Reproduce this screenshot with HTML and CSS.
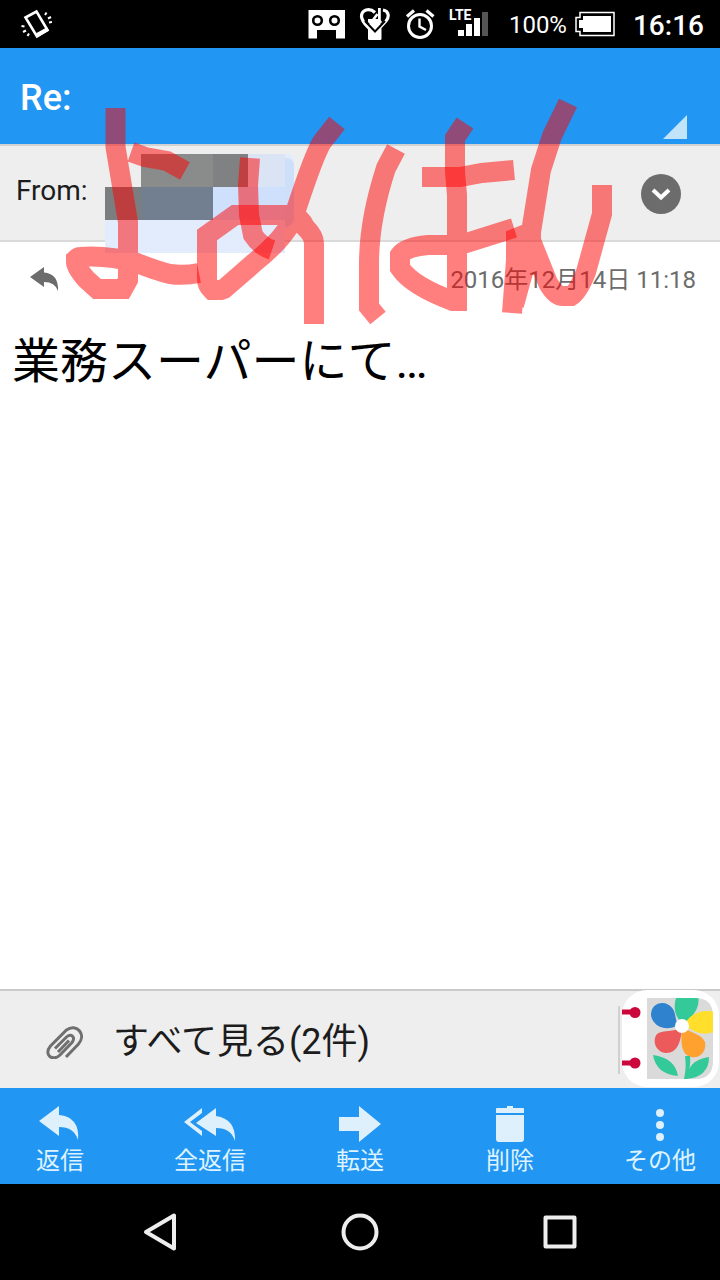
FILE: index.html
```html
<!DOCTYPE html>
<html lang="ja">
<head>
<meta charset="utf-8">
<meta name="viewport" content="width=device-width, initial-scale=1">
<title>Re:</title>
<link rel="stylesheet" href="styles.css">
</head>
<body>
<div class="screen">
  <div class="status">
    <svg class="status-left" width="32" height="32" viewBox="20 8 32 32" fill="none" stroke="#fff">
      <path d="M25.500 17.500L36.500 11.500L47.500 30L37 36.500Z" stroke-width="2.600"/>
      <path d="M37 35L48 29" stroke-width="4"/>
      <path d="M45 15l1.500-2.500M48 18.500l3-1.500M49 22.500l3-.500M24.500 26.500l-3-.5M26 30.500l-3 1.500M29 33.500l-1.500 2.500" stroke-width="2"/>
    </svg>
    <div class="status-right">
      <svg width="38" height="32" viewBox="310 8 38 32">
        <path d="M311.500 10H348V38.500H339V30H320V38.500H311.500Z" fill="#fff"/>
        <circle cx="320.500" cy="20.500" r="4.300" fill="#fff" stroke="#000" stroke-width="2.600"/>
        <circle cx="337.500" cy="20.500" r="4.300" fill="#fff" stroke="#000" stroke-width="2.600"/>
      </svg>
      <svg width="32" height="34" viewBox="361 7 32 34" fill="none">
        <path d="M370 24H383.500V38.500Q383.500 40 382 40H371.500Q370 40 370 38.500Z" fill="#fff"/>
        <path d="M377 12.500C371 7 363.500 10 363.500 16.500C364 22 368 25 371 28M385 10C391 11 391.500 17 388 21L382.500 27" stroke="#fff" stroke-width="3.200"/>
        <path d="M367 21L377 31.500L387 21" stroke="#000" stroke-width="2"/>
        <path d="M370 19H380V8H382.800V20L384 22L377 29.500L370 22Z" fill="#fff"/>
        <path d="M375 20L379.500 14" stroke="#fff" stroke-width="2.600"/>
      </svg>
      <svg width="30" height="32" viewBox="408 8 30 32" fill="none" stroke="#fff">
        <circle cx="423" cy="26" r="11.500" stroke-width="3"/>
        <path d="M422.500 18.500V26.500L429 30" stroke-width="2.400"/>
        <path d="M410 16.500L417 10.500M429.500 10.500L436.500 16.500" stroke-width="3.200"/>
      </svg>
      <span class="signal">
        <svg width="32" height="28" viewBox="457 10 32 28" fill="#fff">
          <path d="M458 30h6v6h-6zM466 24h6v12h-6zM474 18h6v18h-6z"/><path d="M482 12h6v24h-6z" fill="#555"/>
        </svg>
        <b class="lte">LTE</b>
      </span>
      <span class="percent">100%</span>
      <svg width="40" height="26" viewBox="575 11 40 26">
        <path d="M580 12.500H614V35.500H580V31.500H576V17.500H580Z" fill="none" stroke="#fff" stroke-width="1.500"/>
        <path d="M583 16H611V32H583V28H579V20H583Z" fill="#fff"/>
      </svg>
      <time class="clock">16:16</time>
    </div>
  </div>

  <header class="subject">
    <h1>Re:</h1>
    <svg class="corner" width="24" height="24" viewBox="0 0 24 24"><path d="M24 0V24H0Z" fill="#c2e4fb"/></svg>
  </header>

  <section class="sender">
    <span>From:</span>
    <button class="expand" aria-label="詳細">
      <svg width="40" height="40" viewBox="0 0 40 40"><circle cx="20" cy="20" r="20" fill="#6c6c6c"/><path d="M12 16L20 23.500L28 16" fill="none" stroke="#fff" stroke-width="4"/></svg>
    </button>
  </section>

  <main class="message">
    <div class="meta">
      <svg width="30" height="26" viewBox="0 0 30 26"><path d="M0 10L14 0V5.500Q29 7 28 24Q25 15 14 15V20Z" fill="#6c6c6c"/></svg>
      <time>2016年12月14日 11:18</time>
    </div>
    <p class="body-text">業務スーパーにて…</p>
  </main>

  <section class="attachments">
    <button class="view-all">
      <svg width="38" height="34" viewBox="45 1024 38 34" fill="none" stroke="#6f6f6f" stroke-width="3">
        <path d="M66 1056L78.500 1043C87 1033 76 1022 66.500 1029L50.500 1045C43 1054 53 1061 60 1054L72 1041.500C76 1036 71 1032 66.500 1036L55 1047.500M58 1051L69 1039.500"/>
      </svg>
      <span>すべて見る(2件)</span>
    </button>
    <i class="divider"></i>
    <button class="sticker" aria-label="スケッチ">
      <svg width="98" height="97" viewBox="0 0 98 97">
        <defs><clipPath id="card"><path d="M25 8H73Q91 8 91 26V71Q91 89 73 89H25Z"/></clipPath></defs>
        <rect width="97" height="97" rx="25" fill="#fff"/>
        <g clip-path="url(#card)">
          <rect x="25" y="8" width="66" height="81" fill="#dadada"/>
          <path d="M60 33C51 25 51 13 56 3H75C80 15 72 26 62 33Z" fill="#34c998"/>
          <path d="M56 35C43 43 30 35 29 25C29 12 44 9 51 19C54 24 53 29 56 35Z" fill="#2f83ce"/>
          <path d="M62 35C69 22 81 19 94 22V41C82 47 72 42 62 35Z" fill="#ffdf2b"/>
          <path d="M60 37C59 51 56 63 44 63C33 62 30 50 35 44C42 39 51 43 60 37Z" fill="#ed5a5c"/>
          <path d="M60 37C68 43 79 43 83 52C85 62 77 69 69 67C58 64 59 50 60 37Z" fill="#ffa12e"/>
          <path d="M63 66H68C69 74 67 80 65 89H62C64 79 64 74 63 66Z" fill="#34c998"/>
          <path d="M31 65Q53 68 56 86Q34 84 31 65ZM87 67Q87 87 64 89Q66 70 87 67Z" fill="#34c998"/>
        </g>
        <circle cx="60" cy="36" r="7" fill="#fff"/>
        <path d="M0 22H11M0 73H11" stroke="#cc073c" stroke-width="5"/>
        <circle cx="13" cy="22.500" r="5.500" fill="#cc073c"/><circle cx="13" cy="73" r="5.500" fill="#cc073c"/>
      </svg>
    </button>
  </section>

  <footer class="toolbar">
    <button><svg width="42" height="36" viewBox="0 0 42 36"><path d="M0 15L20 0V9Q41 11 39 34Q35 21 20 21V30Z"/></svg><span>返信</span></button>
    <button><svg width="52" height="36" viewBox="0 0 52 36"><path d="M12 17L32 2V10Q52 13 51 35Q47 22 32 22V30Z"/><path d="M0 16L18 2V7L6 16L18 25V30Z"/></svg><span>全返信</span></button>
    <button><svg width="42" height="36" viewBox="0 0 42 36"><path d="M0 11H20V0L42 18L20 36V25H0Z"/></svg><span>転送</span></button>
    <button><svg width="28" height="36" viewBox="0 0 28 36"><path d="M0 7V3Q0 2 1 2H11V0H17V2H27Q28 2 28 3V7ZM0 9H28V33Q28 36 25 36H3Q0 36 0 33Z"/></svg><span>削除</span></button>
    <button><svg width="10" height="36" viewBox="0 0 10 36"><circle cx="5" cy="7" r="4"/><circle cx="5" cy="19" r="4"/><circle cx="5" cy="31" r="4"/></svg><span>その他</span></button>
  </footer>

  <nav class="nav">
    <button aria-label="戻る"><svg width="40" height="40" viewBox="0 0 40 40"><path d="M34 3.500V36.500L6 20Z"/></svg></button>
    <button aria-label="ホーム"><svg width="40" height="40" viewBox="0 0 40 40"><circle cx="20" cy="20" r="16.500"/></svg></button>
    <button aria-label="履歴"><svg width="40" height="40" viewBox="0 0 40 40"><rect x="5.500" y="5.500" width="29" height="29"/></svg></button>
  </nav>

  <!-- mosaic over the sender's name, with freehand marker strokes on top -->
  <svg class="marker" width="640" height="340" viewBox="0 0 640 340" aria-hidden="true">
    <path d="M248 154H290Q294 157 294 162V220Q292 227 285 227V253H105V220H213V187H248Z" fill="#e2ecfc"/>
    <path d="M213 187H285V220H213Z" fill="#cfe0fd"/>
    <path d="M285 158Q294 158 294 166V220Q292 227 285 227Z" fill="#cddff9"/>
    <path d="M248 154H285V187H248Z" fill="#dbe4f4"/>
    <path d="M141 154H213V187H141Z" fill="#8a8b8b"/>
    <path d="M213 154H248V187H213Z" fill="#808182"/>
    <path d="M105 187H141V220H105Z" fill="#7c7d7e"/>
    <path d="M141 187H213V220H141Z" fill="#727f90"/>
    <g fill="none" stroke="#ff0000" stroke-opacity=".5" stroke-width="20">
      <path d="M115.500 108V147L128 222V280L123 289H97L87 280Q76 268 76 262V259Q78 257 80 257Q108 255 137 263Q157 271 170 274Q184 276 199 273"/>
      <path d="M131 152L145 157L167 161L185 171"/>
      <path d="M250 158L248 185L249 215L253 235Q260 246 272 250"/>
      <path d="M337 123L322 142Q314 155 296 210Q290 234 255 262L224 289L221 290H212Q207 285 207 280V235L235 215H292Q301 218 305 227Q314 236 314 243V324"/>
      <path d="M396 149L386 168Q369 220 369 264V307L378 318"/>
      <path d="M422 177H460L482 173L514 170"/>
      <path d="M465 123L455 138V172L457 195V301H453Q412 286 400 268V255Q406 247 428 245H460L514 228"/>
      <path d="M568 103L552 136L541 170L531 232L516 238V260L512 313M514 305L520 283L526 262M531 232V275M530 238L548 283Q556 297 564 296H571Q578 292 586 272L602 214V185"/>
    </g>
  </svg>
</div>
</body>
</html>
```
FILE: styles.css
```css
* { box-sizing: border-box; }
body, h1, p { margin: 0; }
body {
  font-family: Roboto, "Noto Sans CJK JP", sans-serif;
  background: #fff;
  color: #1c1c1c;
}
button {
  padding: 0;
  border: 0;
  background: none;
  color: inherit;
  font: inherit;
}
svg { display: block; flex: none; }

.screen {
  position: relative;
  display: flex;
  flex-direction: column;
  min-height: 100vh;
}

.status {
  display: flex;
  align-items: center;
  justify-content: space-between;
  height: 48px;
  padding: 0 16px 0 20px;
  background: #000;
  color: #fff;
}
.status-right { display: flex; align-items: center; gap: 14px; }
.signal { position: relative; width: 40px; padding-left: 8px; }
.lte {
  position: absolute;
  top: -3px;
  left: 0;
  font-size: 14px;
  line-height: 16px;
}
.percent {
  margin: 0 -6px 0 6px;
  padding-top: 2px;
  font-size: 24px;
  line-height: 32px;
}
.clock {
  margin-left: 4px;
  padding-top: 4px;
  font-size: 28px;
  line-height: 32px;
  font-weight: 500;
}

.subject {
  display: flex;
  align-items: center;
  justify-content: space-between;
  min-height: 96px;
  padding: 4px 33px 0 20px;
  background: #2196f3;
  color: #fff;
}
.subject h1 { font-size: 36px; line-height: 48px; font-weight: 500; }
.corner { align-self: flex-end; margin-bottom: 5px; }

.sender {
  display: flex;
  align-items: center;
  justify-content: space-between;
  min-height: 98px;
  padding: 2px 39px 0 16px;
  border-top: 2px solid #d2d2d2;
  border-bottom: 2px solid #dadada;
  background: #eee;
  font-size: 28px;
  line-height: 32px;
}
.sender span { padding-bottom: 6px; }

.message { flex: 1; }
.meta {
  display: flex;
  align-items: center;
  justify-content: space-between;
  height: 76px;
  padding: 0 24px 0 30px;
  color: #6c6c6c;
  font-size: 24px;
  line-height: 32px;
}
.body-text {
  padding: 8px 12px;
  color: #000;
  font-size: 48px;
  line-height: 72px;
}

.attachments {
  position: relative;
  display: flex;
  align-items: center;
  min-height: 99px;
  padding-right: 100px;
  border-top: 2px solid #cacaca;
  background: #eee;
}
.view-all {
  display: flex;
  flex: 1;
  align-items: center;
  gap: 30px;
  padding: 4px 0 0 45px;
  font-size: 36px;
  line-height: 48px;
  text-align: left;
}
.divider { width: 2px; height: 68px; background: #d0d0d0; }
.sticker { position: absolute; top: -1px; right: 0; }

.toolbar {
  display: flex;
  justify-content: space-between;
  height: 96px;
  background: #2196f3;
}
.toolbar button {
  display: flex;
  flex-direction: column;
  align-items: center;
  gap: 3px;
  width: 120px;
  padding-top: 18px;
  color: #def3ff;
  font-size: 24px;
  line-height: 32px;
}
.toolbar svg { fill: #def0fc; }

.nav {
  display: flex;
  align-items: center;
  justify-content: center;
  gap: 160px;
  height: 96px;
  background: #000;
}
.nav svg { fill: none; stroke: #eee; stroke-width: 4; stroke-linejoin: round; }

.marker { position: absolute; top: 0; left: 0; pointer-events: none; }
```
